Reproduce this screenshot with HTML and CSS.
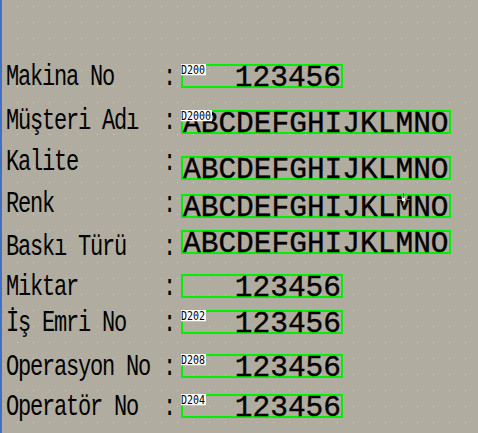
FILE: index.html
```html
<!DOCTYPE html>
<html lang="tr">
<head>
<meta charset="utf-8">
<title>Makina</title>
<link rel="stylesheet" href="styles.css">
</head>
<body>
<div class="screen">
  <div class="row r-makina">
    <div class="lbl"><span class="name">Makina No</span><span class="colon">:</span></div>
    <div class="field short"><span class="tag">D200</span><span class="val num">123456</span></div>
  </div>
  <div class="row r-musteri">
    <div class="lbl"><span class="name">Müşteri Adı</span><span class="colon">:</span></div>
    <div class="field long"><span class="tag">D2000</span><span class="val">ABCDEFGHIJKLMNO</span></div>
  </div>
  <div class="row r-kalite">
    <div class="lbl"><span class="name">Kalite</span><span class="colon">:</span></div>
    <div class="field long"><span class="val">ABCDEFGHIJKLMNO</span></div>
  </div>
  <div class="row r-renk">
    <div class="lbl"><span class="name">Renk</span><span class="colon">:</span></div>
    <div class="field long"><span class="val">ABCDEFGHIJKLMNO</span>
      <svg class="cursor" width="13" height="13" viewBox="0 0 13 13"><path d="M6.5 0v5M6.5 8v5M0 6.5h5M8 6.5h5" stroke="#6e6478" stroke-width="1"/><rect x="5" y="5" width="3" height="3" fill="#ffffff"/></svg>
    </div>
  </div>
  <div class="row r-baski">
    <div class="lbl"><span class="name">Baskı Türü</span><span class="colon">:</span></div>
    <div class="field long"><span class="val">ABCDEFGHIJKLMNO</span></div>
  </div>
  <div class="row r-miktar">
    <div class="lbl"><span class="name">Miktar</span><span class="colon">:</span></div>
    <div class="field short"><span class="val num">123456</span></div>
  </div>
  <div class="row r-isemri">
    <div class="lbl"><span class="name">İş Emri No</span><span class="colon">:</span></div>
    <div class="field short"><span class="tag">D202</span><span class="val num">123456</span></div>
  </div>
  <div class="row r-operasyon">
    <div class="lbl"><span class="name">Operasyon No</span><span class="colon">:</span></div>
    <div class="field short"><span class="tag">D208</span><span class="val num">123456</span></div>
  </div>
  <div class="row r-operator">
    <div class="lbl"><span class="name">Operatör No</span><span class="colon">:</span></div>
    <div class="field short"><span class="tag">D204</span><span class="val num">123456</span></div>
  </div>
</div>
</body>
</html>
```
FILE: styles.css
```css
html, body {
  margin: 0;
  padding: 0;
}
body {
  width: 478px;
  height: 433px;
  overflow: hidden;
  background-color: #b0aca0;
}
.screen {
  width: 476px;
  height: 433px;
  box-sizing: border-box;
  border-left: 2px solid #3f70c4;
  padding: 64px 0 0 4px;
  display: flex;
  flex-direction: column;
  background-color: #b0aca0;
  background-image: radial-gradient(circle at 0.5px 0.5px, #d2cec3 0.7px, transparent 0.9px);
  background-size: 16px 16px;
  background-position: 15px 6px;
}
.row {
  display: flex;
  align-items: flex-start;
  height: 24px;
}
.r-makina { margin-bottom: 22px; }
.r-musteri { margin-bottom: 22px; }
.r-kalite { margin-bottom: 14px; }
.r-renk { margin-bottom: 12px; }
.r-baski { margin-bottom: 20px; }
.r-miktar { margin-bottom: 12px; }
.r-isemri { margin-bottom: 20px; }
.r-operasyon { margin-bottom: 16px; }

.lbl {
  display: flex;
  width: 175px;
  flex: none;
  height: 24px;
  margin-top: 4px;
  font-family: "Liberation Mono", monospace;
  font-size: 22px;
  letter-spacing: -1.2px;
  line-height: 24px;
  color: #000;
  white-space: pre;
  transform: scaleY(1.36);
  transform-origin: 0 17.85px;
}
.r-musteri .lbl { margin-top: 2px; }
.r-kalite .lbl { margin-top: -3px; }
.r-renk .lbl { margin-top: 1px; }
.r-baski .lbl { margin-top: 8px; }
.name {
  width: 157px;
}
.colon {
  width: 12px;
}

.field {
  position: relative;
  box-sizing: border-box;
  height: 24px;
  border: 2px solid #00f000;
  display: flex;
  font-family: "Liberation Mono", monospace;
  font-size: 29.5px;
  line-height: 24px;
  color: #000;
  white-space: pre;
  -webkit-text-stroke: 0.35px #000;
}
.short {
  width: 162px;
  justify-content: flex-end;
}
.long {
  width: 270px;
}
.val {
  display: block;
}
.tag {
  position: absolute;
  top: -2px;
  left: -2px;
  box-sizing: border-box;
  height: 9px;
  padding: 0 1px 0 0;
  background: #ffffff;
  font-family: "DejaVu Sans Mono", monospace;
  font-size: 10px;
  letter-spacing: 0;
  line-height: 9px;
  -webkit-text-stroke: 0;
  transform: scaleY(1.25);
  transform-origin: 0 0;
  z-index: 1;
  color: #000;
}
.cursor {
  position: absolute;
  left: 214px;
  top: -3px;
}
```
